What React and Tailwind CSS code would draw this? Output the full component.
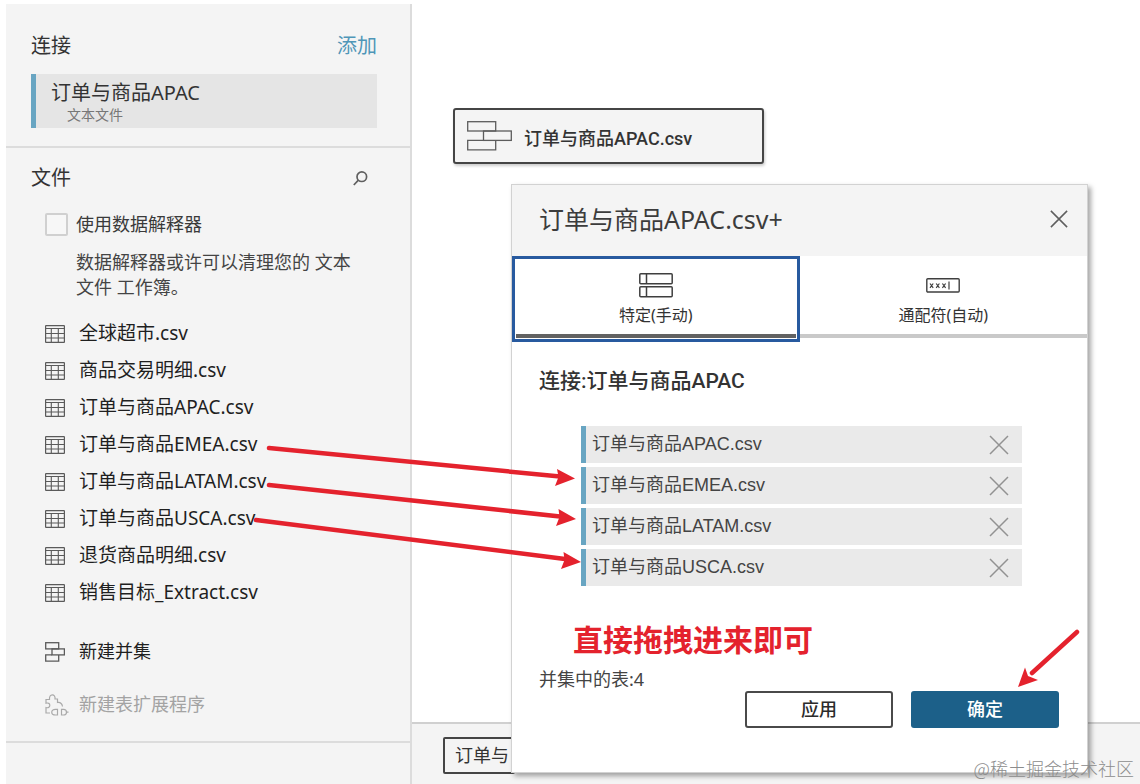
import React from "react";

const files = [
  "全球超市.csv",
  "商品交易明细.csv",
  "订单与商品APAC.csv",
  "订单与商品EMEA.csv",
  "订单与商品LATAM.csv",
  "订单与商品USCA.csv",
  "退货商品明细.csv",
  "销售目标_Extract.csv",
];

const unionTables = [
  "订单与商品APAC.csv",
  "订单与商品EMEA.csv",
  "订单与商品LATAM.csv",
  "订单与商品USCA.csv",
];

function TableIcon() {
  return (
    <svg width="20" height="18" viewBox="0 0 20 18" fill="none" stroke="#5a5a5a" aria-hidden="true">
      <rect x="0.6" y="0.6" width="18.8" height="16.8" rx="0.5" strokeWidth="1.2" />
      <path d="M1 3.5H19M1 8.5H19M1 13H19M6.3 3.5V17M13.3 3.5V17" strokeWidth="1.1" />
    </svg>
  );
}

function UnionIcon() {
  return (
    <svg width="20" height="20" viewBox="0 0 20 20" fill="none" stroke="#5a5a5a" strokeWidth="1.3" aria-hidden="true">
      <rect x="0.7" y="0.7" width="13" height="6.2" />
      <rect x="7" y="6.9" width="12.4" height="6" />
      <path d="M7 12.9H0.7V19.2H13.7V12.9" />
    </svg>
  );
}

function WideUnionIcon() {
  return (
    <svg width="45" height="30" viewBox="0 0 45 30" fill="none" stroke="#5c5c5c" strokeWidth="1.3" aria-hidden="true">
      <rect x="0.7" y="0.7" width="28" height="9.3" />
      <rect x="16.5" y="10" width="27.8" height="9.4" />
      <path d="M16.5 19.4H0.7V28.8H28.7V19.4" />
    </svg>
  );
}

function ExtensionIcon() {
  return (
    <svg width="24" height="22" viewBox="0 0 24 22" fill="none" stroke="#a9a9a9" strokeWidth="1.2" aria-hidden="true">
      <path d="M5 19H1V13.5C3.500 14.300 4.800 12.800 4.800 11.200S3.500 8.600 1 9.200V5.500H4.500C4.200 2.500 5.500 0.800 7.300 0.800S10.400 2.500 10 5H12.500V8.500C15 8.200 17 9.500 17.500 12.500" />
      <path d="M12.500 15.300H10.500C5.500 15.300 5.500 21 10.500 21H12.500Z" />
      <path d="M16.500 15.300H18.500C20.500 15.300 21.500 16.800 21.500 18.200S20.500 21 18.500 21H16.500ZM21.500 18.200H23.500" />
    </svg>
  );
}

function Cross({ className, strokeWidth }) {
  return (
    <svg className={className} viewBox="0 0 20 20" fill="none" stroke="currentColor" strokeWidth={strokeWidth} aria-hidden="true">
      <path d="M1 1L19 19M19 1L1 19" />
    </svg>
  );
}

function Sidebar() {
  return (
    <aside className="w-[406px] shrink-0 border-r-2 border-[#dcdcdc] bg-[#f4f4f4]">
      <section className="border-b-2 border-[#dcdcdc] px-[25px] pt-[27px] pb-[18px]">
        <div className="flex items-center justify-between pr-2 text-[20px] leading-[30px]">
          <h2>连接</h2>
          <a href="#add" className="text-[#4f96b8]">添加</a>
        </div>
        <div className="mt-[13px] mr-2 h-[54px] border-l-[5px] border-[#68a5c2] bg-[#e5e5e5] pl-[15px]">
          <div className="pt-1 text-[20px] leading-[30px]">订单与商品APAC</div>
          <div className="pl-4 text-[14px] leading-[14px] text-[#777]">文本文件</div>
        </div>
      </section>
      <section className="border-b-2 border-[#dcdcdc] pr-9 pb-[18px] pl-[25px]">
        <div className="flex items-center justify-between pt-[15px] text-[20px] leading-[30px]">
          <h2>文件</h2>
          <button type="button" aria-label="搜索" className="pr-[6px]">
            <svg width="15" height="15" viewBox="0 0 15 15" fill="none" stroke="#5f5f5f" strokeWidth="1.7" aria-hidden="true">
              <circle cx="8.800" cy="5.700" r="4.800" />
              <path d="M5.400 9.200L0.800 14" />
            </svg>
          </button>
        </div>
        <div className="pt-[19px] pl-[14px] text-[18px]">
          <label className="flex items-center gap-2 leading-[24px] text-[#3a3a3a]">
            <input type="checkbox" className="size-[23px] appearance-none rounded-[2px] border-2 border-[#d0d0d0] bg-[#f7f7f7]" />
            <span>使用数据解释器</span>
          </label>
          <p className="pt-[14px] pl-[31px] leading-[25px] text-[#444]">
            数据解释器或许可以清理您的 文本<br />文件 工作簿。
          </p>
          <ul className="pt-[15px] text-[19px] text-[#1f1f1f]">
            {files.map((name) => (
              <li key={name} className="flex items-center gap-[14px] leading-[37px]">
                <TableIcon />
                <span>{name}</span>
              </li>
            ))}
          </ul>
          <button type="button" className="mt-[22px] flex items-center gap-[14px] leading-[37px] text-[#1f1f1f]">
            <UnionIcon />
            <span>新建并集</span>
          </button>
          <button type="button" disabled className="mt-4 flex items-center gap-[10px] leading-[37px] text-[#a3a3a3]">
            <ExtensionIcon />
            <span>新建表扩展程序</span>
          </button>
        </div>
      </section>
    </aside>
  );
}

function UnionDialog() {
  return (
    <div role="dialog" aria-labelledby="union-title" className="absolute top-[180px] left-[99px] w-[577px] border border-[#d2d2d2] bg-white shadow-[3px_3px_5px_rgba(0,0,0,0.35)]">
      <header className="flex h-[71px] items-center justify-between bg-[#f4f4f4] pr-[19px] pb-[3px] pl-[27px]">
        <h1 id="union-title" className="text-[25px] leading-[34px] text-[#3c3c3c]">订单与商品APAC.csv+</h1>
        <button type="button" aria-label="关闭" className="text-[#5e5e5e]">
          <Cross className="size-[18px]" strokeWidth="1.700" />
        </button>
      </header>
      <div role="tablist" className="grid h-[86px] grid-cols-2 text-[16px] leading-[20px]">
        <button type="button" role="tab" aria-selected="true" className="border-[3px] border-[#285a9f] px-px pb-px">
          <span className="flex h-full flex-col items-center border-b-[4px] border-[#626262] pt-[14px]">
            <svg width="34" height="25" viewBox="0 0 34 25" fill="none" stroke="#3f3f3f" strokeWidth="1.500" aria-hidden="true">
              <rect x="0.800" y="0.800" width="32.400" height="10" rx="1" />
              <rect x="0.800" y="13.800" width="32.400" height="10" rx="1" />
              <path d="M7.500 1V11M7.500 14V24" />
            </svg>
            <span className="pt-[7px]">特定(手动)</span>
          </span>
        </button>
        <button type="button" role="tab" aria-selected="false" className="mb-1 flex flex-col items-center border-b-[4px] border-[#c9c9c9] pt-[22px]">
          <svg width="34" height="15" viewBox="0 0 34 15" fill="none" stroke="#3f3f3f" strokeWidth="1.400" aria-hidden="true">
            <rect x="0.800" y="0.800" width="32.400" height="13.200" rx="1" />
            <path d="M4 5.500L7.200 9.800M7.200 5.500L4 9.800M10.200 5.500L13.400 9.800M13.400 5.500L10.200 9.800M16.400 5.500L19.600 9.800M19.600 5.500L16.400 9.800M23 3.500V11.500" strokeWidth="1.200" />
          </svg>
          <span className="pt-3">通配符(自动)</span>
        </button>
      </div>
      <div className="pr-7 pb-[44px] pl-[27px]">
        <h2 className="pt-6 font-['Roboto','Noto_Sans_CJK_SC',sans-serif] text-[21px] leading-[30px] font-medium text-[#333]">连接:订单与商品APAC</h2>
        <ul className="mt-[30px] mr-[37px] ml-[42px] flex flex-col gap-1 font-['Liberation_Sans','Noto_Sans_CJK_SC',sans-serif] text-[18px] text-[#444]">
          {unionTables.map((name) => (
            <li key={name} className="flex items-center justify-between border-l-[5px] border-[#68a5c2] bg-[#eaeaea] pr-[13px] pl-[6px] leading-[37px]">
              <span>{name}</span>
              <button type="button" aria-label={"移除 " + name} className="text-[#929292]">
                <Cross className="size-[20px]" strokeWidth="1.500" />
              </button>
            </li>
          ))}
        </ul>
        <p className="pt-[82px] text-[18px] leading-[22px] text-[#444]">并集中的表:4</p>
        <div className="flex justify-end gap-[18px] pt-px text-[18px] font-medium">
          <button type="button" className="h-[37px] w-[148px] rounded-[3px] border-2 border-[#4a4a4a] bg-white text-[#2b2b2b]">应用</button>
          <button type="button" className="h-[37px] w-[148px] rounded-[3px] bg-[#1c6089] text-white">确定</button>
        </div>
      </div>
    </div>
  );
}

function Annotations() {
  return (
    <div className="pointer-events-none absolute top-0 left-0">
      <svg width="1140" height="784" viewBox="0 0 1140 784" fill="#e4222d" stroke="#e4222d" strokeWidth="4.500" strokeLinecap="round" aria-hidden="true">
        <path d="M269 448L560 476.500M269 485L560 516.500M256 520L565 559M1077 632L1032 673" />
        <path stroke="none" d="M575 478.500L555 486L558.500 477L557 469ZM576 519L556 526L559.500 517L558.500 509ZM581 562L561 569L564.500 560L563.500 552ZM1018 687L1025 667.500L1028 676L1038 680Z" />
      </svg>
      <p className="absolute top-[620px] left-[573px] text-[30px] leading-[40px] font-bold whitespace-nowrap text-[#e4222d]">直接拖拽进来即可</p>
    </div>
  );
}

export default function App() {
  return (
    <div className="relative flex min-h-screen overflow-hidden bg-white pt-1 pl-[6px] font-['Noto_Sans','Noto_Sans_CJK_SC',sans-serif] text-[#333]">
      <Sidebar />
      <main className="relative flex flex-1 flex-col">
        <div className="flex-1 pt-[104px] pl-[41px]">
          <div className="flex h-[56px] w-[311px] items-center gap-3 rounded-[3px] border-2 border-[#454545] bg-[#f4f4f4] pl-[12px] font-['Roboto','Noto_Sans_CJK_SC',sans-serif] text-[18px] font-medium shadow-[1px_2px_3px_rgba(0,0,0,0.2)]">
            <WideUnionIcon />
            <span className="pt-1">订单与商品APAC.csv</span>
          </div>
        </div>
        <footer className="h-[62px] border-t-2 border-[#d0d0d0] bg-[#f4f4f4] pt-[13px] pl-[31px]">
          <button type="button" className="h-[37px] w-[72px] overflow-hidden rounded-[2px] border-2 border-[#454545] pl-[10px] text-left text-[18px] whitespace-nowrap">订单与</button>
        </footer>
        <UnionDialog />
      </main>
      <Annotations />
      <div className="absolute right-[6px] bottom-0 font-['Noto_Sans_CJK_SC',sans-serif] text-[18px] leading-[32px] font-light text-[#8c8c8c]">@稀土掘金技术社区</div>
    </div>
  );
}
